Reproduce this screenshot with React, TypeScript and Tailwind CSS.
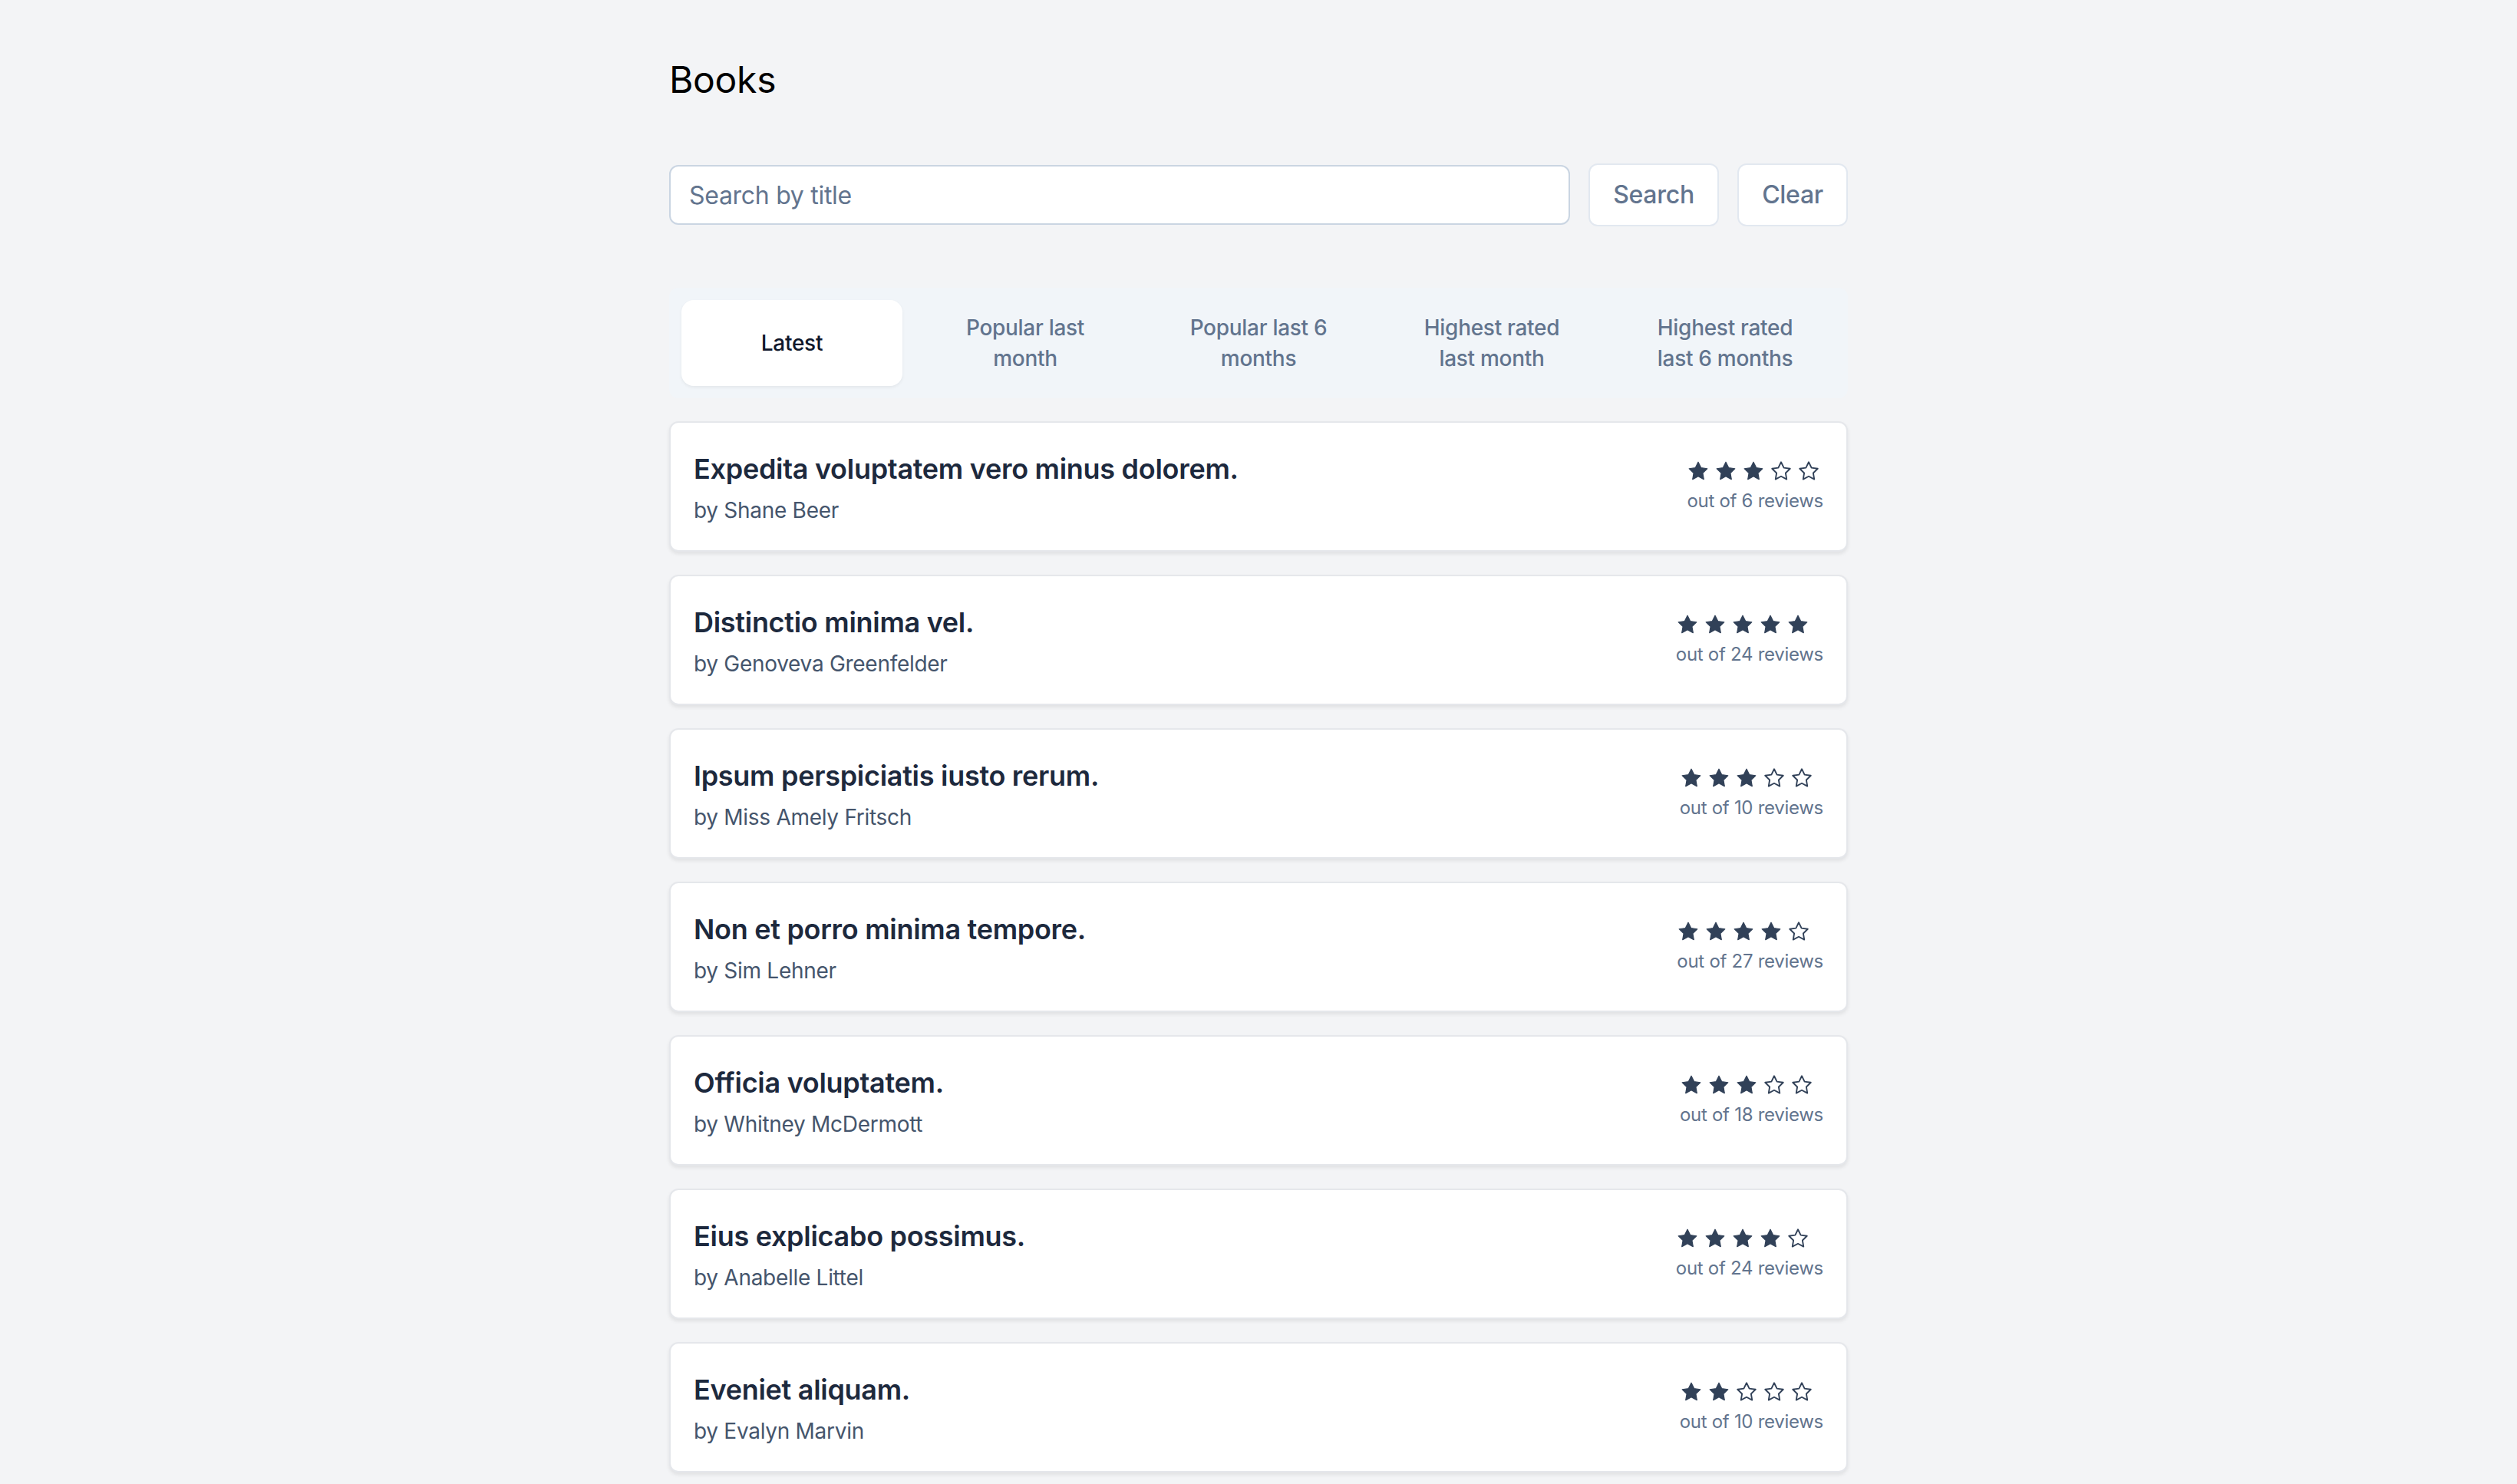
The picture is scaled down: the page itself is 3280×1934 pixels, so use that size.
import { useState } from 'react';

type Book = {
  title: string;
  author: string;
  rating: number;
  reviews: number;
};

const books: Book[] = [
  { title: 'Expedita voluptatem vero minus dolorem.', author: 'Shane Beer', rating: 3, reviews: 6 },
  { title: 'Distinctio minima vel.', author: 'Genoveva Greenfelder', rating: 5, reviews: 24 },
  { title: 'Ipsum perspiciatis iusto rerum.', author: 'Miss Amely Fritsch', rating: 3, reviews: 10 },
  { title: 'Non et porro minima tempore.', author: 'Sim Lehner', rating: 4, reviews: 27 },
  { title: 'Officia voluptatem.', author: 'Whitney McDermott', rating: 3, reviews: 18 },
  { title: 'Eius explicabo possimus.', author: 'Anabelle Littel', rating: 4, reviews: 24 },
  { title: 'Eveniet aliquam.', author: 'Evalyn Marvin', rating: 2, reviews: 10 },
];

const tabs = [
  'Latest',
  'Popular last month',
  'Popular last 6 months',
  'Highest rated last month',
  'Highest rated last 6 months',
];

const STAR = '12,2.6 14.9,8.5 21.4,9.4 16.7,14 17.8,20.5 12,17.4 6.2,20.5 7.3,14 2.6,9.4 9.1,8.5';

function Star({ filled }: { filled: boolean }) {
  return (
    <svg viewBox="0 0 24 24" className="h-[30px] w-[30px]">
      <polygon
        points={STAR}
        fill={filled ? 'currentColor' : 'none'}
        stroke="currentColor"
        strokeWidth={filled ? 1 : 1.5}
        strokeLinejoin="round"
      />
    </svg>
  );
}

function StarRating({ rating }: { rating: number }) {
  return (
    <div className="flex gap-[6px] text-slate-700">
      {[1, 2, 3, 4, 5].map((i) => (
        <Star key={i} filled={i <= rating} />
      ))}
    </div>
  );
}

export default function App() {
  const [query, setQuery] = useState('');
  const [active, setActive] = useState(0);

  return (
    <div className="min-h-screen bg-gray-100 font-['Inter',sans-serif] tracking-[-0.018em]">
      <div className="mx-auto w-[1536px] pt-[72px] pb-4">
        <h1 className="mb-[77px] text-[48px] leading-[64px] text-black">Books</h1>

        {/* Search */}
        <form className="flex items-center gap-6" onSubmit={(e) => e.preventDefault()}>
          <input
            value={query}
            onChange={(e) => setQuery(e.target.value)}
            placeholder="Search by title"
            className="h-[78px] flex-1 rounded-xl border-2 border-slate-300 bg-white px-6 text-[32px] text-slate-700 outline-none placeholder:text-slate-500"
          />
          <button
            type="submit"
            className="h-[82px] w-[170px] rounded-xl border-2 border-slate-200 bg-white text-[32px] font-medium text-slate-500"
          >
            Search
          </button>
          <button
            type="button"
            onClick={() => setQuery('')}
            className="h-[82px] w-[144px] rounded-xl border-2 border-slate-200 bg-white text-[32px] font-medium text-slate-500"
          >
            Clear
          </button>
        </form>

        {/* Filter tabs */}
        <div className="mt-20 grid grid-cols-5 gap-4 rounded-xl bg-slate-100 p-4">
          {tabs.map((tab, i) => (
            <button
              key={tab}
              onClick={() => setActive(i)}
              className={
                i === active
                  ? 'flex items-center justify-center rounded-2xl bg-white px-10 py-4 text-[28px] leading-[40px] font-medium text-slate-900 shadow-[0_2px_4px_rgba(0,0,0,0.06)]'
                  : 'flex items-center justify-center rounded-2xl px-10 py-4 text-[28px] leading-[40px] font-medium text-slate-500'
              }
            >
              {tab}
            </button>
          ))}
        </div>

        {/* Book list */}
        <ul className="mt-[30px] flex flex-col gap-[30px]">
          {books.map((book) => (
            <li
              key={book.title}
              className="flex items-center justify-between rounded-xl border-2 border-gray-200 bg-white py-8 px-[30px] shadow-[0_3px_5px_rgba(0,0,0,0.08)]"
            >
              <div>
                <div className="text-[36px] leading-[56px] font-semibold text-slate-800">{book.title}</div>
                <div className="mt-[6px] text-[28px] leading-[40px] text-slate-600">by {book.author}</div>
              </div>
              <div>
                <StarRating rating={book.rating} />
                <div className="mt-[8px] text-[24px] leading-[32px] text-slate-500">
                  out of {book.reviews} reviews
                </div>
              </div>
            </li>
          ))}
        </ul>
      </div>
    </div>
  );
}
